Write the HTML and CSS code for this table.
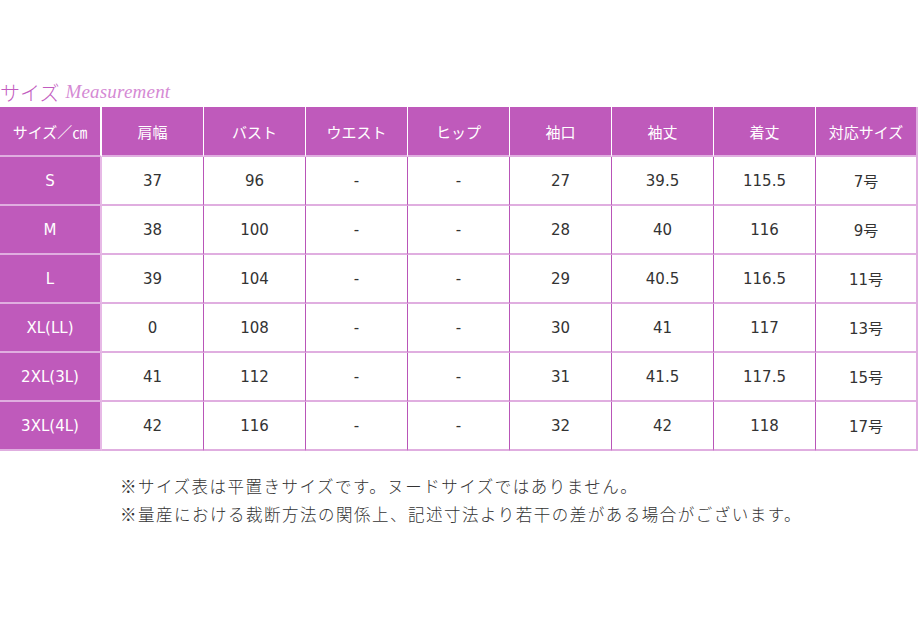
FILE: index.html
```html
<!DOCTYPE html>
<html lang="ja">
<head>
<meta charset="utf-8">
<title>サイズ Measurement</title>
<link rel="stylesheet" href="styles.css">
</head>
<body>
<div class="page">
  <h2 class="title"><span class="title-ja">サイズ</span> <span class="title-en">Measurement</span></h2>
  <table class="size-table">
    <colgroup>
      <col><col><col><col><col><col><col><col><col>
    </colgroup>
    <thead>
      <tr>
        <th>サイズ／㎝</th><th>肩幅</th><th>バスト</th><th>ウエスト</th><th>ヒップ</th><th>袖口</th><th>袖丈</th><th>着丈</th><th>対応サイズ</th>
      </tr>
    </thead>
    <tbody>
      <tr><th class="row-head">S</th><td>37</td><td>96</td><td>-</td><td>-</td><td>27</td><td>39.5</td><td>115.5</td><td>7号</td></tr>
      <tr><th class="row-head">M</th><td>38</td><td>100</td><td>-</td><td>-</td><td>28</td><td>40</td><td>116</td><td>9号</td></tr>
      <tr><th class="row-head">L</th><td>39</td><td>104</td><td>-</td><td>-</td><td>29</td><td>40.5</td><td>116.5</td><td>11号</td></tr>
      <tr><th class="row-head">XL(LL)</th><td>0</td><td>108</td><td>-</td><td>-</td><td>30</td><td>41</td><td>117</td><td>13号</td></tr>
      <tr><th class="row-head">2XL(3L)</th><td>41</td><td>112</td><td>-</td><td>-</td><td>31</td><td>41.5</td><td>117.5</td><td>15号</td></tr>
      <tr><th class="row-head">3XL(4L)</th><td>42</td><td>116</td><td>-</td><td>-</td><td>32</td><td>42</td><td>118</td><td>17号</td></tr>
    </tbody>
  </table>
  <div class="notes">
    <p>※サイズ表は平置きサイズです。ヌードサイズではありません。</p>
    <p>※量産における裁断方法の関係上、記述寸法より若干の差がある場合がございます。</p>
  </div>
</div>
</body>
</html>
```
FILE: styles.css
```css
html, body {
  margin: 0;
  padding: 0;
  background: #ffffff;
}

.page {
  padding-top: 77px;
  font-family: "DejaVu Sans", "Noto Sans CJK JP", sans-serif;
  color: #333333;
}

.title {
  margin: 0;
  height: 30px;
  display: flex;
  align-items: center;
  gap: 6px;
  font-weight: normal;
  white-space: nowrap;
}

.title-ja {
  font-family: "Noto Sans CJK JP", sans-serif;
  font-size: 20px;
  font-weight: 300;
  color: #c25cc0;
}

.title-en {
  font-family: "Liberation Serif", serif;
  font-style: italic;
  font-size: 19px;
  color: #d58ad4;
  letter-spacing: 0.2px;
}

.size-table {
  width: 918px;
  table-layout: fixed;
  border-collapse: separate;
  border-spacing: 0;
}

.size-table col {
  width: 102px;
}

.size-table th,
.size-table td {
  padding: 0;
  text-align: center;
  vertical-align: middle;
  font-size: 15px;
  box-sizing: border-box;
}

.size-table thead th {
  height: 50px;
  background: #bf5abb;
  color: #ffffff;
  font-family: "Noto Sans CJK JP", sans-serif;
  font-weight: 400;
  border-right: 1px solid #ffffff;
  border-bottom: 2px solid #e0aee0;
}

.size-table thead th:first-child {
  border-right: 2px solid #ffffff;
}

.size-table thead th:last-child {
  border-right: 2px solid #e0aee0;
}

.size-table tbody th.row-head {
  height: 49px;
  background: #bf5abb;
  color: #ffffff;
  font-weight: normal;
  border-right: 2px solid #e7b9e6;
  border-bottom: 2px solid #e0aee0;
}

.size-table tbody td {
  height: 49px;
  background: #ffffff;
  color: #333333;
  border-right: 1px solid #b955b8;
  border-bottom: 2px solid #e0aee0;
}

.size-table tbody td:last-child {
  border-right: 2px solid #e0aee0;
}

.notes {
  padding-top: 21px;
  padding-left: 120px;
  font-family: "Noto Sans CJK JP", serif;
  font-weight: 300;
  font-size: 16.5px;
  letter-spacing: 1.5px;
  color: #333333;
}

.notes p {
  margin: 0;
  line-height: 28px;
}
```
